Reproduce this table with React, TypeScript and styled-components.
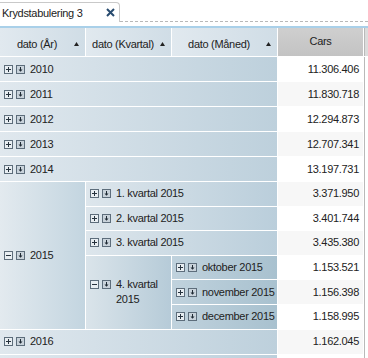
import React from "react";
import styled, { createGlobalStyle } from "styled-components";

const GlobalStyle = createGlobalStyle`
  html, body { margin: 0; padding: 0; overflow: hidden; background: #fff; }
  body { font-family: "Liberation Sans", Arial, sans-serif; }
`;

const Page = styled.div`
  width: 368px;
  height: 358px;
  overflow: hidden;
  font-size: 11px;
  letter-spacing: -0.3px;
  color: #222;
`;

const TabBar = styled.div`
  display: flex;
  align-items: flex-end;
  height: 22px;
`;

const Tab = styled.div`
  box-sizing: border-box;
  width: 120px;
  height: 20px;
  display: flex;
  align-items: center;
  justify-content: space-between;
  padding: 0 4px 0 2px;
  border: 1px solid #c9c9c9;
  border-left: none;
  border-bottom: none;
  border-top-right-radius: 4px;
`;

const TabRest = styled.div`
  flex: 1;
  border-bottom: 1px dashed #b8b8b8;
`;

const Spacer = styled.div`
  height: 4px;
`;

const Grid = styled.div`
  display: grid;
  grid-template-columns: 85px 85px 105px 85px 1fr;
  grid-template-rows: 28px repeat(5, 24px) repeat(6, 23.6px) 24px 24px;
  gap: 1px;
  background: #fff;
  border-top: 2px solid #a9d0e9;
`;

const HeadCell = styled.div<{ $col: number }>`
  grid-column: ${(p) => p.$col};
  grid-row: 1;
  display: flex;
  align-items: center;
  padding: 3px 6px 0 0;
  background: linear-gradient(to right, #e1e9ef, #d0dde6);
`;

const HeadText = styled.span`
  flex: 1;
  text-align: center;
`;

const CarsHead = styled.div`
  grid-column: 4;
  grid-row: 1;
  display: flex;
  justify-content: center;
  align-items: center;
  padding-bottom: 2px;
  background: linear-gradient(to bottom, #cfcfcf, #c3c3c3);
`;

const Filler = styled.div<{ $row: string; $head?: boolean }>`
  grid-column: 5;
  grid-row: ${(p) => p.$row};
  border-left: 1px solid #b9b9b9;
  background: ${(p) => (p.$head ? "#dcdcdc" : "#fff")};
`;

const tones: Record<string, [string, string]> = {
  year: ["#e0e8ee", "#bdd0dc"],
  year2015: ["#e3eaef", "#c3d5e0"],
  quarter: ["#dde6ec", "#bacedb"],
  q4: ["#dae4ea", "#b6cbd8"],
  month: ["#c0d2dd", "#a8c1cf"],
};

const Label = styled.div<{ $col: string; $row: string; $tone: string }>`
  grid-column: ${(p) => p.$col};
  grid-row: ${(p) => p.$row};
  display: flex;
  align-items: center;
  padding-left: 4px;
  min-width: 0;
  background: linear-gradient(
    to right,
    ${(p) => tones[p.$tone][0]},
    ${(p) => tones[p.$tone][1]}
  );
`;

const LabelInner = styled.div`
  display: flex;
  align-items: flex-start;
`;

const Icons = styled.span`
  display: flex;
  gap: 3px;
  margin-top: 3px;
  flex-shrink: 0;
`;

const LabelText = styled.span<{ $wrap?: boolean }>`
  margin-left: 5px;
  line-height: 15px;
  white-space: ${(p) => (p.$wrap ? "normal" : "nowrap")};
`;

const Value = styled.div<{ $row: string; $alt?: boolean }>`
  grid-column: 4;
  grid-row: ${(p) => p.$row};
  display: flex;
  align-items: center;
  justify-content: flex-end;
  padding-right: 4px;
  padding-bottom: 1px;
  background: ${(p) => (p.$alt ? "#f7f7f7" : "#fff")};
`;

const SortArrow = () => (
  <svg width="5" height="4" viewBox="0 0 5 4">
    <polygon points="2.5,0 5,4 0,4" fill="#222" />
  </svg>
);

const CloseIcon = () => (
  <svg width="9" height="9" viewBox="0 0 9 9">
    <path d="M1 1L8 8M8 1L1 8" stroke="#284b6f" strokeWidth="2" />
  </svg>
);

const ToggleIcon = ({ open }: { open?: boolean }) => (
  <svg width="9" height="9" viewBox="0 0 9 9">
    <rect x="0.5" y="0.5" width="8" height="8" fill="#e8eef2" stroke="#5d6d7b" />
    <path d={open ? "M2 4.5h5" : "M2 4.5h5M4.5 2v5"} stroke="#26323d" />
  </svg>
);

const DrillIcon = () => (
  <svg width="9" height="9" viewBox="0 0 9 9">
    <rect x="0.5" y="0.5" width="8" height="8" fill="#c9d3db" stroke="#5d6d7b" />
    <path d="M4.5 2v3" stroke="#1f2a34" />
    <polygon points="2.5,4.5 6.5,4.5 4.5,6.8" fill="#1f2a34" />
  </svg>
);

type Row = {
  col: string;
  row: string;
  tone: string;
  text?: string;
  open?: boolean;
};

const labels: Row[] = [
  { col: "1 / 4", row: "2", tone: "year", text: "2010" },
  { col: "1 / 4", row: "3", tone: "year", text: "2011" },
  { col: "1 / 4", row: "4", tone: "year", text: "2012" },
  { col: "1 / 4", row: "5", tone: "year", text: "2013" },
  { col: "1 / 4", row: "6", tone: "year", text: "2014" },
  { col: "1", row: "7 / 13", tone: "year2015", text: "2015", open: true },
  { col: "2 / 4", row: "7", tone: "quarter", text: "1. kvartal 2015" },
  { col: "2 / 4", row: "8", tone: "quarter", text: "2. kvartal 2015" },
  { col: "2 / 4", row: "9", tone: "quarter", text: "3. kvartal 2015" },
  { col: "2", row: "10 / 13", tone: "q4", text: "4. kvartal 2015", open: true },
  { col: "3", row: "10", tone: "month", text: "oktober 2015" },
  { col: "3", row: "11", tone: "month", text: "november 2015" },
  { col: "3", row: "12", tone: "month", text: "december 2015" },
  { col: "1 / 4", row: "13", tone: "year", text: "2016" },
  { col: "1 / 4", row: "14", tone: "year" },
];

const values: { row: string; v: string }[] = [
  { row: "2", v: "11.306.406" },
  { row: "3", v: "11.830.718" },
  { row: "4", v: "12.294.873" },
  { row: "5", v: "12.707.341" },
  { row: "6", v: "13.197.731" },
  { row: "7", v: "3.371.950" },
  { row: "8", v: "3.401.744" },
  { row: "9", v: "3.435.380" },
  { row: "10", v: "1.153.521" },
  { row: "11", v: "1.156.398" },
  { row: "12", v: "1.158.995" },
  { row: "13", v: "1.162.045" },
  { row: "14", v: "" },
];

const headers = ["dato (År)", "dato (Kvartal)", "dato (Måned)"];

export default function App() {
  return (
    <Page>
      <GlobalStyle />
      <TabBar>
        <Tab>
          <span>Krydstabulering 3</span>
          <CloseIcon />
        </Tab>
        <TabRest />
      </TabBar>
      <Spacer />
      <Grid>
        {headers.map((h, i) => (
          <HeadCell key={h} $col={i + 1}>
            <HeadText>{h}</HeadText>
            <SortArrow />
          </HeadCell>
        ))}
        <CarsHead>Cars</CarsHead>
        <Filler $row="1" $head />
        {labels.map((l) => (
          <Label key={l.row + l.col} $col={l.col} $row={l.row} $tone={l.tone}>
            {l.text && (
              <LabelInner>
                <Icons>
                  <ToggleIcon open={l.open} />
                  <DrillIcon />
                </Icons>
                <LabelText $wrap={l.tone === "q4"}>{l.text}</LabelText>
              </LabelInner>
            )}
          </Label>
        ))}
        {values.map((v, i) => (
          <Value key={v.row} $row={v.row} $alt={i % 2 === 1}>
            {v.v}
          </Value>
        ))}
        <Filler $row="2 / 15" />
      </Grid>
    </Page>
  );
}
